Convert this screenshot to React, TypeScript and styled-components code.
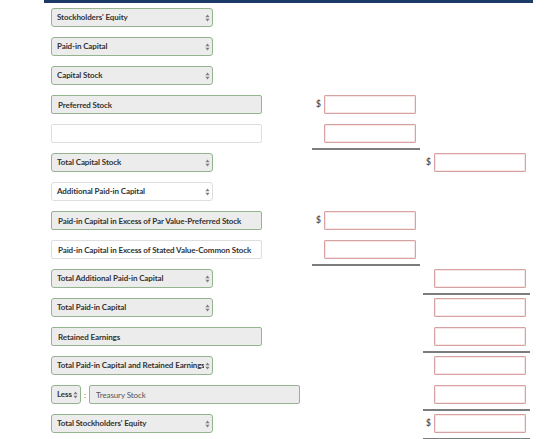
import styled, { createGlobalStyle } from "styled-components"

const GlobalStyle = createGlobalStyle`
    html, body{
        margin: 0;
        padding: 0;
        background: #fff;
    }
    *{
        box-sizing: border-box;
    }
`

type Field = {
    kind: 'select' | 'text' | 'less'
    label: string
    plain?: boolean
}

type Amount = {
    dollar?: boolean
    ruled?: boolean
}

type Line = {
    field: Field
    mid?: Amount
    right?: Amount
}

const lines: Line[] = [
    { field: { kind: 'select', label: "Stockholders' Equity" } },
    { field: { kind: 'select', label: 'Paid-in Capital' } },
    { field: { kind: 'select', label: 'Capital Stock' } },
    { field: { kind: 'text', label: 'Preferred Stock' }, mid: { dollar: true } },
    { field: { kind: 'text', label: '', plain: true }, mid: { ruled: true } },
    { field: { kind: 'select', label: 'Total Capital Stock' }, right: { dollar: true } },
    { field: { kind: 'select', label: 'Additional Paid-in Capital', plain: true } },
    { field: { kind: 'text', label: 'Paid-in Capital in Excess of Par Value-Preferred Stock' }, mid: { dollar: true } },
    { field: { kind: 'text', label: 'Paid-in Capital in Excess of Stated Value-Common Stock', plain: true }, mid: { ruled: true } },
    { field: { kind: 'select', label: 'Total Additional Paid-in Capital' }, right: { ruled: true } },
    { field: { kind: 'select', label: 'Total Paid-in Capital' }, right: {} },
    { field: { kind: 'text', label: 'Retained Earnings' }, right: { ruled: true } },
    { field: { kind: 'select', label: 'Total Paid-in Capital and Retained Earnings' }, right: {} },
    { field: { kind: 'less', label: 'Treasury Stock' }, right: { ruled: true } },
    { field: { kind: 'select', label: "Total Stockholders' Equity" }, right: { dollar: true, ruled: true } },
]

function Arrows(){
    return(
        <ArrowIcon width="5" height="8" viewBox="0 0 5 8" xmlns="http://www.w3.org/2000/svg">
            <path d="M2.5 0.4 4.6 3.2H0.4z" fill="#7d7d7d"/>
            <path d="M2.5 7.6 4.6 4.8H0.4z" fill="#7d7d7d"/>
        </ArrowIcon>
    )
}

function LabelField({ field }: { field: Field }){
    if(field.kind === 'select'){
        return(
            <SelectBox $plain={field.plain} $width={162}>
                <select defaultValue={field.label}>
                    <option>{field.label}</option>
                </select>
                <Arrows />
            </SelectBox>
        )
    }
    if(field.kind === 'less'){
        return(
            <LessRow>
                <SelectBox $width={30}>
                    <select defaultValue="Less">
                        <option>Less</option>
                    </select>
                    <Arrows />
                </SelectBox>
                <Colon>:</Colon>
                <TextBox $width={211} $light readOnly value={field.label} />
            </LessRow>
        )
    }
    return <TextBox $plain={field.plain} $width={211} readOnly value={field.label} />
}

function AmountCell({ amount, right }: { amount?: Amount, right?: boolean }){
    if(!amount) return <Cell $right={right} />
    return(
        <Cell $right={right} $ruled={amount.ruled}>
            <Dollar>{amount.dollar ? '$' : ''}</Dollar>
            <AmountInput type="text" />
        </Cell>
    )
}

export default function App(){
    return(
        <Wrapper>
            <GlobalStyle />
            <Sheet>
                {lines.map((line, i) => (
                    <Row key={i}>
                        <LabelCell>
                            <LabelField field={line.field} />
                        </LabelCell>
                        <AmountCell amount={line.mid} />
                        <AmountCell amount={line.right} right />
                    </Row>
                ))}
            </Sheet>
        </Wrapper>
    )
}

const Wrapper = styled.div`
    width: 560px;
    height: 439px;
    overflow: hidden;
    background: #fff;
    font-family: Lato, "Liberation Sans", sans-serif;
`

const Sheet = styled.div`
    margin-left: 44px;
    width: 489px;
    border-top: 3px solid #1d3b68;
    padding: 5px 0 0 7px;
    display: flex;
    flex-direction: column;
`

const Row = styled.div`
    display: grid;
    grid-template-columns: 261px 108px 110px;
    height: 29px;
    align-items: start;
`

const LabelCell = styled.div`
    display: flex;
    align-items: flex-start;
    height: 19px;
`

const SelectBox = styled.div<{ $plain?: boolean, $width: number }>`
    position: relative;
    flex: none;
    width: ${p => p.$width}px;
    height: 19px;
    select{
        appearance: none;
        -webkit-appearance: none;
        display: block;
        width: 100%;
        height: 19px;
        margin: 0;
        padding: 0 8px 0 5px;
        border: 1px solid ${p => p.$plain ? '#dedede' : '#93b48f'};
        border-radius: 3px;
        background-color: ${p => p.$plain ? '#fff' : '#ececec'};
        color: #333;
        font-family: Lato, "Liberation Sans", sans-serif;
        font-size: 8px;
        font-weight: 700;
        letter-spacing: -0.1px;
        line-height: 17px;
        outline: none;
    }
`

const ArrowIcon = styled.svg`
    position: absolute;
    right: 3px;
    top: 6px;
    pointer-events: none;
`

const TextBox = styled.input<{ $plain?: boolean, $width: number, $light?: boolean }>`
    display: block;
    flex: none;
    width: ${p => p.$width}px;
    height: 19px;
    margin: 0;
    padding: 0 6px;
    border: 1px solid ${p => p.$plain ? '#dedede' : '#93b48f'};
    border-radius: 2px;
    background-color: ${p => p.$plain ? '#fff' : '#ececec'};
    color: ${p => p.$light ? '#555' : '#333'};
    font-family: Lato, "Liberation Sans", sans-serif;
    font-size: 8px;
    font-weight: ${p => p.$light ? 400 : 700};
    letter-spacing: -0.1px;
    outline: none;
`

const LessRow = styled.div`
    display: flex;
    align-items: center;
`

const Colon = styled.span`
    width: 8px;
    text-align: center;
    font-size: 8px;
    color: #555;
`

const Cell = styled.div<{ $right?: boolean, $ruled?: boolean }>`
    display: flex;
    align-items: flex-start;
    height: 26px;
    margin-left: ${p => p.$right ? 3 : 0}px;
    padding-left: ${p => p.$right ? 3 : 4}px;
    border-bottom: 2px solid ${p => p.$ruled ? '#7c7c7c' : 'transparent'};
`

const Dollar = styled.span`
    width: 8px;
    height: 19px;
    line-height: 19px;
    font-size: 8.5px;
    font-weight: 700;
    color: #555;
`

const AmountInput = styled.input`
    display: block;
    width: 92px;
    height: 19px;
    margin: 0;
    padding: 0 4px;
    border: 1px solid #d6a2a2;
    border-radius: 1px;
    background: #fff;
    box-shadow: inset 0 0 0 1px #f6e6e6;
    outline: none;
`
